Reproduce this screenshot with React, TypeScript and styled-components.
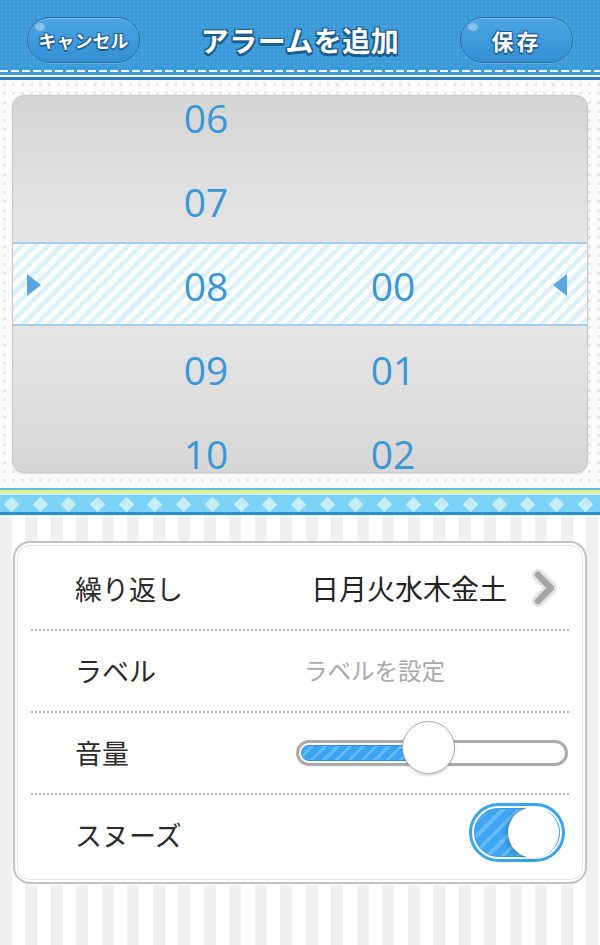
import styled, { createGlobalStyle } from 'styled-components'

const GlobalStyle = createGlobalStyle`
  html, body {
    margin: 0;
    padding: 0;
    background: #fff;
  }
  body {
    font-family: 'Noto Sans CJK JP', 'Noto Sans', sans-serif;
  }
`

const Screen = styled.div`
  width: 600px;
  height: 945px;
  overflow: hidden;
  display: flex;
  flex-direction: column;
`

// header
const Header = styled.header`
  height: 80px;
  box-sizing: border-box;
  padding: 17px 27px 0;
  display: flex;
  align-items: flex-start;
  background:
    linear-gradient(90deg, rgba(255, 255, 255, 0.9) 0 8px, transparent 8px) 0 70px / 11px 2px repeat-x,
    linear-gradient(to bottom, transparent 0 75px, #fff 75px 77px, #2b7fc1 77px 80px),
    radial-gradient(rgba(255, 255, 255, 0.07) 1px, transparent 1.5px) 0 0 / 4px 4px,
    #3b9bd8;
`

const PillButton = styled.button<{ $wide?: boolean }>`
  position: relative;
  width: 113px;
  height: 46px;
  border-radius: 23px;
  border: 1.5px solid #2a6da6;
  background: linear-gradient(#4aa6e4, #3490d3);
  box-shadow: inset 0 1px 0 rgba(255, 255, 255, 0.25), 0 1px 0 rgba(255, 255, 255, 0.2);
  color: #fff;
  font-family: 'Noto Sans CJK JP', sans-serif;
  font-weight: 700;
  font-size: ${(p) => (p.$wide ? '22px' : '18px')};
  letter-spacing: ${(p) => (p.$wide ? '3px' : '0')};
  padding: 0;
  text-shadow: 1px 1px 0 #1d5c8f, -1px 1px 0 #1d5c8f, 1px -1px 0 #1d5c8f, -1px -1px 0 #1d5c8f,
    0 2px 0 #1d5c8f;
  &::before {
    content: '';
    position: absolute;
    left: 7px;
    top: 5px;
    width: 10px;
    height: 8px;
    border-radius: 50%;
    background: rgba(255, 255, 255, 0.35);
  }
`

const Title = styled.h1`
  flex: 1;
  margin: 0;
  text-align: center;
  line-height: 46px;
  font-size: 28px;
  font-weight: 700;
  color: #fff;
  letter-spacing: 0.5px;
  text-shadow: 1.5px 1.5px 0 #1d5c8f, -1.5px 1.5px 0 #1d5c8f, 1.5px -1.5px 0 #1d5c8f,
    -1.5px -1.5px 0 #1d5c8f, 0 2.5px 0 #1d5c8f;
`

// time picker
const PickerArea = styled.section`
  height: 408px;
  box-sizing: border-box;
  padding: 15px 12px 0;
  background:
    radial-gradient(#e6e6e6 1.3px, transparent 1.8px) 0 0 / 9px 9px,
    #fbfbfb;
`

const Panel = styled.div`
  height: 378px;
  box-sizing: border-box;
  border: 1px solid #c9c9c9;
  border-radius: 12px;
  overflow: hidden;
  background: linear-gradient(#d5d5d5, #e7e7e7 42%, #e7e7e7 58%, #d6d6d6);
  box-shadow: 0 1px 2px rgba(0, 0, 0, 0.12);
`

const Wheel = styled.div`
  margin-top: -22px;
`

const PickRow = styled.div<{ $selected?: boolean }>`
  height: 84px;
  box-sizing: border-box;
  display: grid;
  grid-template-columns: 117px 152px 35px 152px 1fr;
  align-items: center;
  ${(p) =>
    p.$selected &&
    `
    border-top: 2px solid #a7cdea;
    border-bottom: 2px solid #a7cdea;
    background: repeating-linear-gradient(135deg, #fff 0 5px, #dcf0fb 5px 9.4px);
  `}
`

const Digit = styled.span<{ $col: number }>`
  grid-column: ${(p) => p.$col};
  text-align: center;
  font-family: 'Open Sans', 'Noto Sans', sans-serif;
  font-size: 39px;
  color: #3a97d5;
  line-height: 1;
  padding-top: 3px;
`

const Arrow = styled.span<{ $dir: 'left' | 'right' }>`
  grid-column: ${(p) => (p.$dir === 'right' ? 1 : 5)};
  justify-self: ${(p) => (p.$dir === 'right' ? 'start' : 'end')};
  margin: ${(p) => (p.$dir === 'right' ? '2px 0 0 14px' : '2px 20px 0 0')};
  width: 14px;
  height: 22px;
  background: #5aa6e0;
  clip-path: ${(p) =>
    p.$dir === 'right' ? 'polygon(0 0, 100% 50%, 0 100%)' : 'polygon(100% 0, 0 50%, 100% 100%)'};
`

// ribbon
const Ribbon = styled.div`
  height: 27px;
  box-sizing: border-box;
  padding: 8px 0 3px 6px;
  display: flex;
  gap: 17.7px;
  align-items: center;
  overflow: hidden;
  background: linear-gradient(
    to bottom,
    #5bc2ee 0 2px,
    #e6f07a 2px 5px,
    #cdeef9 5px 7px,
    #7dd3f7 7px 24px,
    #2a8fd0 24px 27px
  );
`

const Diamond = styled.span`
  flex: none;
  width: 11px;
  height: 11px;
  background: #c6edfb;
  transform: rotate(45deg);
`

// settings
const SettingsArea = styled.section`
  flex: 1;
  padding: 26px 13px 0;
  background: repeating-linear-gradient(90deg, #f0f0f0 0 12px, #fff 12px 25.5px);
`

const Card = styled.div`
  height: 343px;
  box-sizing: border-box;
  padding: 4px 16px 0;
  border: 2px solid #c3c3c3;
  border-radius: 17px;
  background: #fff;
  box-shadow: inset 0 0 0 2px #fff, inset 0 0 0 3px #e4e4e4, 0 1px 0 #fff;
`

const Row = styled.div`
  height: 82px;
  display: grid;
  grid-template-columns: 265px 1fr;
  align-items: center;
  &:not(:first-child) {
    background: linear-gradient(90deg, #b5b5b5 0 1.6px, transparent 1.6px) 0 0 / 4px 1.6px repeat-x;
  }
`

const Label = styled.span`
  padding-left: 44px;
  font-size: 27px;
  color: #2b2b2b;
`

const DaysCell = styled.div`
  display: flex;
  align-items: center;
  justify-content: flex-end;
  gap: 22px;
  padding-right: 8px;
  margin-left: -60px;
`

const Days = styled.span`
  font-size: 28px;
  color: #222;
  white-space: nowrap;
`

const Placeholder = styled.span`
  padding-left: 8px;
  font-size: 23.5px;
  color: #a9a9a9;
`

const Track = styled.div`
  position: relative;
  width: 272px;
  height: 26px;
  box-sizing: border-box;
  border: 3px solid #ababab;
  border-radius: 13px;
  background: #fff;
  margin-top: 1px;
`

const Fill = styled.div`
  height: 16px;
  margin: 2px;
  box-sizing: border-box;
  border: 1px solid #2b8fe2;
  border-radius: 8px;
  background: repeating-linear-gradient(135deg, #3ca5f3 0 6px, #62bbf8 6px 9px);
`

const Thumb = styled.div`
  position: absolute;
  top: -22px;
  width: 53px;
  height: 53px;
  box-sizing: border-box;
  border-radius: 50%;
  border: 1.5px solid #a9a9a9;
  background: #fff;
  box-shadow: 0 2px 3px rgba(0, 0, 0, 0.15);
`

const Toggle = styled.div`
  justify-self: end;
  margin-right: 4px;
  margin-bottom: 4px;
  width: 96px;
  height: 59px;
  box-sizing: border-box;
  border: 3px solid #37a5f1;
  border-radius: 30px;
  padding: 2px;
  background: #fff;
  display: flex;
`

const ToggleFill = styled.div`
  flex: 1;
  display: flex;
  justify-content: flex-end;
  align-items: center;
  border-radius: 26px;
  border: 1px solid #2f98e6;
  background: repeating-linear-gradient(135deg, #3ea6f2 0 7px, #64bbf7 7px 11px);
`

const Knob = styled.div`
  width: 51px;
  height: 51px;
  border-radius: 50%;
  background: #fff;
  box-shadow: -3px 1px 4px rgba(0, 0, 0, 0.18);
`

const Chevron = () => (
  <svg width="32" height="40" viewBox="0 0 32 40">
    <polyline points="9,7 22,20 9,33" fill="none" stroke="#e3e3e3" strokeWidth="12" strokeLinecap="round" strokeLinejoin="round" />
    <polyline points="9,7 22,20 9,33" fill="none" stroke="#a6a6a6" strokeWidth="6.5" strokeLinecap="round" strokeLinejoin="round" />
  </svg>
)

const rows = [
  { h: '06', m: '' },
  { h: '07', m: '' },
  { h: '08', m: '00', selected: true },
  { h: '09', m: '01' },
  { h: '10', m: '02' },
]

const volume = 0.485
const trackInner = 266

export default function App() {
  const center = Math.round(trackInner * volume)

  return (
    <Screen>
      <GlobalStyle />
      <Header>
        <PillButton>キャンセル</PillButton>
        <Title>アラームを追加</Title>
        <PillButton $wide>保存</PillButton>
      </Header>

      <PickerArea>
        <Panel>
          <Wheel>
            {rows.map((r) => (
              <PickRow key={r.h} $selected={r.selected}>
                {r.selected && <Arrow $dir="right" />}
                <Digit $col={2}>{r.h}</Digit>
                <Digit $col={4}>{r.m}</Digit>
                {r.selected && <Arrow $dir="left" />}
              </PickRow>
            ))}
          </Wheel>
        </Panel>
      </PickerArea>

      <Ribbon>
        {Array.from({ length: 22 }).map((_, i) => (
          <Diamond key={i} />
        ))}
      </Ribbon>

      <SettingsArea>
        <Card>
          <Row>
            <Label>繰り返し</Label>
            <DaysCell>
              <Days>日月火水木金土</Days>
              <Chevron />
            </DaysCell>
          </Row>
          <Row>
            <Label>ラベル</Label>
            <Placeholder>ラベルを設定</Placeholder>
          </Row>
          <Row>
            <Label>音量</Label>
            <Track>
              <Fill style={{ width: center - 4 }} />
              <Thumb style={{ left: center - 26 }} />
            </Track>
          </Row>
          <Row>
            <Label>スヌーズ</Label>
            <Toggle>
              <ToggleFill>
                <Knob />
              </ToggleFill>
            </Toggle>
          </Row>
        </Card>
      </SettingsArea>
    </Screen>
  )
}
